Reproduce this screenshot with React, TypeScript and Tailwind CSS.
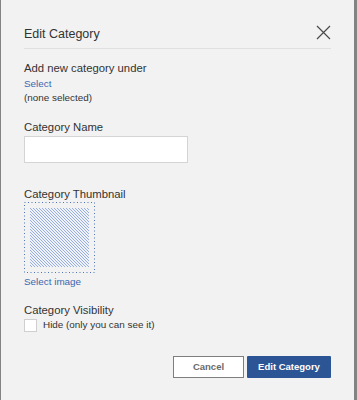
import React from "react";

export default function App() {
  const font = { fontFamily: '"Liberation Sans", Arial, sans-serif' };
  return (
    <div className="w-[357px] h-[400px] bg-[#838383] flex overflow-hidden" style={font}>
      <div className="ml-[1px] w-[353px] h-full bg-[#f2f2f2] px-[23px] flex flex-col text-[#333333]">
        <div className="pt-[26px] flex justify-between items-start">
          <div className="text-[12.5px] leading-[16px]">Edit Category</div>
          <svg width="15" height="15" viewBox="0 0 15 15" className="-mt-[1px]">
            <path d="M1 1 L14 14 M14 1 L1 14" stroke="#4a4a4a" strokeWidth="1.2" fill="none" />
          </svg>
        </div>
        <div className="mt-[6px] border-t border-[#e0e0e0]" />

        <div className="mt-[12px] text-[11.3px] leading-[14px]">Add new category under</div>
        <div className="mt-[2px] text-[9.9px] leading-[14px] text-[#3b66b0]">Select</div>
        <div className="text-[9.9px] leading-[14px]">(none selected)</div>

        <div className="mt-[15px] text-[11.3px] leading-[14px]">Category Name</div>
        <div className="mt-[2px] w-[164px] h-[27px] bg-white border border-[#d4d4d4]" />

        <div className="mt-[24px] text-[11.3px] leading-[14px]">Category Thumbnail</div>
        <div className="mt-[1px] relative w-[71px] h-[71px] p-[6px]">
          <svg width="71" height="71" className="absolute inset-0">
            <rect x="0.5" y="0.5" width="70" height="70" fill="none" stroke="#4d74b9" strokeWidth="1" strokeDasharray="1 2.5" />
          </svg>
          <svg width="59" height="59" className="block">
            <defs>
              <pattern id="hatch" patternUnits="userSpaceOnUse" width="3" height="3">
                <rect width="3" height="3" fill="#eef2fa" />
                <rect x="0" y="0" width="1" height="1" fill="#9aaed8" />
                <rect x="1" y="1" width="1" height="1" fill="#9aaed8" />
                <rect x="2" y="2" width="1" height="1" fill="#9aaed8" />
              </pattern>
            </defs>
            <rect width="59" height="59" fill="url(#hatch)" />
          </svg>
        </div>
        <div className="mt-[2px] text-[9.9px] leading-[14px] text-[#3b66b0]">Select image</div>

        <div className="mt-[14px] text-[11.3px] leading-[14px]">Category Visibility</div>
        <div className="mt-[1px] flex items-center gap-[6px]">
          <div className="w-[13px] h-[13px] bg-white border border-[#cfcfcf]" />
          <div className="text-[9.9px] leading-[14px]">Hide (only you can see it)</div>
        </div>

        <div className="mt-[24px] flex justify-end gap-[3px]">
          <button className="w-[71px] h-[22px] bg-white border-[1.5px] border-[#7f7f7f] text-[#6a6a6a] text-[9.5px] font-bold">
            Cancel
          </button>
          <button className="w-[84px] h-[22px] bg-[#2c5596] text-white text-[9.5px] font-bold rounded-[1px]">
            Edit Category
          </button>
        </div>
      </div>
    </div>
  );
}
